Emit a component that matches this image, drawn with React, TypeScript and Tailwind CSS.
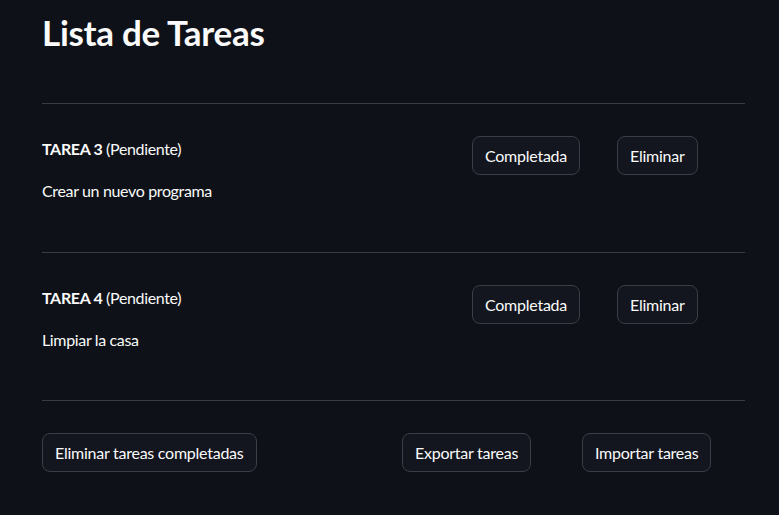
import React from 'react';

interface Task {
    id: number;
    title: string;
    status: string;
}

const tasks: Task[] = [
    { id: 3, title: 'Crear un nuevo programa', status: 'Pendiente' },
    { id: 4, title: 'Limpiar la casa', status: 'Pendiente' },
];

const Btn: React.FC<{ children: React.ReactNode }> = ({ children }) => (
    <button
        type="button"
        className="h-[39px] px-[12px] rounded-lg border border-[#3b3e46] bg-[#13161e] text-[#fafafa] text-[16px] leading-none tracking-[-0.25px] whitespace-nowrap"
    >
        {children}
    </button>
);

const Divider = () => <div className="h-px bg-[#393b43]" />;

export default function App() {
    return (
        <div
            className="min-h-[515px] w-full bg-[#0e1117] text-[#fafafa] px-[42px]"
            style={{ fontFamily: 'Lato, "Noto Sans", sans-serif' }}
        >
            <div className="w-[703px]">
                <h1 className="pt-[12px] pb-[50px] text-[35px] leading-[41px] font-bold tracking-[-0.3px]">Lista de Tareas</h1>

                {tasks.map((t, i) => (
                    <React.Fragment key={t.id}>
                        <Divider />
                        <div
                            className={
                                i === 0
                                    ? 'grid grid-cols-[414px_129px_128px] gap-4 pt-[32px] pb-[33px]'
                                    : 'grid grid-cols-[414px_129px_128px] gap-4 pt-[32px] pb-[32px]'
                            }
                        >
                            <div className="text-[16px] leading-[25px] tracking-[-0.35px]">
                                <p className="mb-[17px]">
                                    <span className="font-bold">TAREA {t.id}</span> ({t.status})
                                </p>
                                <p className="mb-4">{t.title}</p>
                            </div>
                            <div>
                                <Btn>Completada</Btn>
                            </div>
                            <div>
                                <Btn>Eliminar</Btn>
                            </div>
                        </div>
                    </React.Fragment>
                ))}

                <Divider />
                <div className="grid grid-cols-[344px_164px_163px] gap-4 pt-[32px] pb-[32px]">
                    <div>
                        <Btn>Eliminar tareas completadas</Btn>
                    </div>
                    <div>
                        <Btn>Exportar tareas</Btn>
                    </div>
                    <div>
                        <Btn>Importar tareas</Btn>
                    </div>
                </div>
            </div>
        </div>
    );
}
